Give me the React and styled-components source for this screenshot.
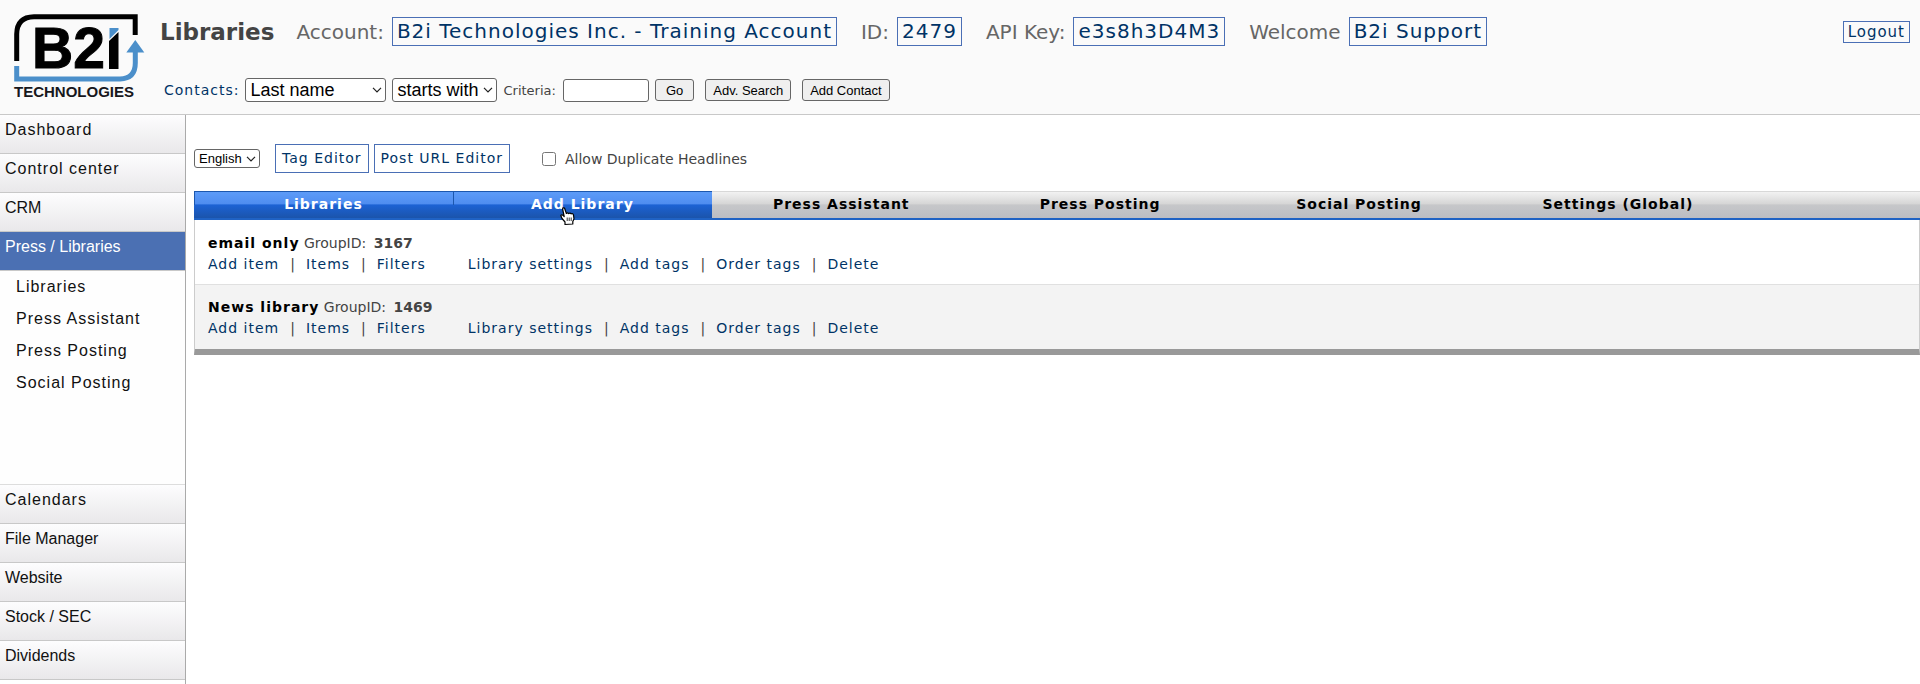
import React from 'react'
import styled, { createGlobalStyle, css } from 'styled-components'

const GlobalStyle = createGlobalStyle`
  * {
    box-sizing: border-box;
  }
  body {
    margin: 0;
    background-color: #ffffff;
    color: #444444;
    font-family: Verdana, 'DejaVu Sans', sans-serif;
    font-size: 14px;
  }
  a {
    color: #003366;
    text-decoration: none;
    letter-spacing: 1px;
  }
`

const sans = "Arial, 'Liberation Sans', sans-serif"

const chevron =
  "url(\"data:image/svg+xml,%3Csvg xmlns='http://www.w3.org/2000/svg' width='10' height='6'%3E%3Cpath d='M1 .8L5 5L9 .8' fill='none' stroke='%23222' stroke-width='1.2'/%3E%3C/svg%3E\")"

const Page = styled.div`
  display: flex;
  flex-direction: column;
  min-height: 100vh;
`

const Header = styled.header`
  display: flex;
  height: 114px;
  background-color: #fafafa;
`

const Logo = styled.svg`
  flex: none;
  width: 160px;
  height: 110px;
  text {
    font-family: ${sans};
    font-weight: bold;
  }
`

const HeaderContent = styled.div`
  flex: 1;
  display: flex;
  flex-direction: column;
  padding: 16px 10px 0 0;
`

const TitleRow = styled.div`
  display: flex;
  align-items: center;
  height: 31px;
  white-space: nowrap;
  h1 {
    margin: 0 22px 0 0;
    font-size: 23px;
    line-height: 28px;
  }
`

const Info = styled.div`
  display: flex;
  align-items: center;
  gap: 8px;
  margin-right: 24px;
  color: #666666;
  font-size: 20px;
`

const BoxLink = styled.a`
  border: 1px solid #4a6fb5;
  ${props =>
    props.$size === 'large' &&
    css`
      padding: 0 4px;
      font-size: 20px;
      line-height: 27px;
    `}
  ${props =>
    props.$size === 'medium' &&
    css`
      padding: 0 6px;
      font-size: 14px;
      line-height: 27px;
    `}
  ${props =>
    props.$size === 'small' &&
    css`
      margin-left: auto;
      padding: 0 4px;
      font-size: 15px;
      line-height: 20px;
    `}
`

const SearchForm = styled.form`
  display: flex;
  align-items: center;
  height: 24px;
  margin-top: 31px;
  padding-left: 4px;
  white-space: nowrap;
  a {
    margin-right: 6px;
  }
  label {
    margin-right: 7px;
    font-size: 13px;
  }
`

const Select = styled.select`
  appearance: none;
  width: ${props => props.$width}px;
  height: ${props => (props.$large ? 24 : 19)}px;
  margin: 0 ${props => (props.$large ? 6 : 0)}px 0 0;
  padding: 0 14px 0 4px;
  border: 1px solid #666666;
  border-radius: 3px;
  background: #ffffff ${chevron} no-repeat right 3px center;
  color: #000000;
  font-family: ${sans};
  font-size: ${props => (props.$large ? 18 : 13)}px;
`

const TextInput = styled.input`
  width: 86px;
  height: 23px;
  margin-right: 6px;
  border: 1px solid #666666;
  border-radius: 3px;
`

const Button = styled.button`
  height: 22px;
  margin-right: 11px;
  padding: 0 ${props => (props.$wide ? 10 : 7)}px;
  border: 1px solid #666666;
  border-radius: 3px;
  background-color: #efefef;
  color: #000000;
  font-family: ${sans};
  font-size: 13px;
`

const Body = styled.div`
  flex: 1;
  display: flex;
  border-top: 1px solid #c8c8c8;
`

const Sidebar = styled.nav`
  flex: none;
  width: 186px;
  border-right: 1px solid #aaaaaa;
  font-family: ${sans};
  font-size: 16px;
`

const MenuItem = styled.a`
  display: block;
  height: 39px;
  padding: 6px 5px 0;
  border-bottom: 1px solid #c8c8c8;
  background: ${props =>
    props.$active ? '#4b70b3' : 'linear-gradient(#fdfdfe, #e9e8ea)'};
  color: ${props => (props.$active ? '#ffffff' : '#111111')};
  letter-spacing: ${props => (props.$spaced ? 1 : 0)}px;
  line-height: 18px;
`

const SubMenu = styled.div`
  padding-bottom: 85px;
  border-bottom: 1px solid #dddddd;
  background-color: #fefefe;
  a {
    display: block;
    padding-left: 16px;
    color: #111111;
    line-height: 32px;
  }
`

const Main = styled.main`
  flex: 1;
  padding: 29px 0 0 8px;
`

const Toolbar = styled.div`
  display: flex;
  align-items: center;
  height: 29px;
  white-space: nowrap;
`

const ToolbarLinks = styled.div`
  display: flex;
  gap: 5px;
  margin: 0 32px 0 15px;
`

const Checkbox = styled.label`
  display: flex;
  align-items: center;
  gap: 9px;
  input {
    width: 14px;
    height: 14px;
    margin: 0;
  }
`

const Tabs = styled.div`
  position: relative;
  display: flex;
  margin-top: 18px;
  height: 29px;
  border-top: 1px solid #d8d8d8;
  border-bottom: 2px solid #1f62c4;
  background: linear-gradient(#f2f2f2, #d6d6d6 45%, #c6c7c9 50%, #bcbdc3);
`

const Tab = styled.a`
  width: 15%;
  margin-top: -1px;
  color: #000000;
  font-weight: bold;
  line-height: 27px;
  text-align: center;
  ${props =>
    props.$active &&
    css`
      border-top: 1px solid #1c57ae;
      background: linear-gradient(#1c57ae, #1c57ae) 0 0 / 1px 13px no-repeat,
        linear-gradient(#5c9bf8, #4f8df0 45%, #1c62d4 50%, #1b54ab);
      color: #ffffff;
      line-height: 25px;
    `}
`

const Pointer = styled.svg`
  position: absolute;
  top: 14px;
  left: 366px;
  width: 16px;
  height: 20px;
`

const LibraryList = styled.div`
  border: 1px solid #cccccc;
  border-top: 0;
  border-bottom: 6px solid #999999;
`

const Library = styled.section`
  height: 64px;
  padding: 13px 13px 0;
  background-color: ${props => (props.$shaded ? '#f3f3f3' : '#ffffff')};
  line-height: 21px;
  & + & {
    height: 65px;
    padding-top: 12px;
    border-top: 1px solid #e0e0e0;
  }
`

const LibraryName = styled.b`
  color: #000000;
  letter-spacing: 1px;
`

const GroupId = styled.b`
  margin-left: 3px;
`

const Actions = styled.div`
  display: flex;
  gap: 42px;
`

const ActionGroup = styled.div`
  display: flex;
  a + a::before {
    content: '|';
    margin: 0 10px 0 11px;
    color: #444444;
  }
`

const infos = [
  { label: 'Account:', value: 'B2i Technologies Inc. - Training Account' },
  { label: 'ID:', value: '2479' },
  { label: 'API Key:', value: 'e3s8h3D4M3' },
  { label: 'Welcome', value: 'B2i Support' },
]

const topMenu = [
  { name: 'Dashboard', spaced: true },
  { name: 'Control center', spaced: true },
  { name: 'CRM' },
  { name: 'Press / Libraries', active: true },
]

const subMenu = ['Libraries', 'Press Assistant', 'Press Posting', 'Social Posting']

const bottomMenu = [
  { name: 'Calendars', spaced: true },
  { name: 'File Manager' },
  { name: 'Website' },
  { name: 'Stock / SEC' },
  { name: 'Dividends' },
]

const tabs = [
  { name: 'Libraries', active: true },
  { name: 'Add Library', active: true },
  { name: 'Press Assistant' },
  { name: 'Press Posting' },
  { name: 'Social Posting' },
  { name: 'Settings (Global)' },
]

const libraries = [
  { name: 'email only', id: 3167 },
  { name: 'News library', id: 1469 },
]

const actions = [
  ['Add item', 'Items', 'Filters'],
  ['Library settings', 'Add tags', 'Order tags', 'Delete'],
]

const Menu = ({ items }) =>
  items.map(item => (
    <MenuItem
      href="#"
      key={item.name}
      $active={item.active}
      $spaced={item.spaced}
    >
      {item.name}
    </MenuItem>
  ))

const B2iLogo = () => (
  <Logo viewBox="0 0 160 110" role="img" aria-label="B2i Technologies">
    <path
      d="M16.7 61V34Q17 17 34 16.7H135.2V35"
      fill="none"
      stroke="#000000"
      strokeWidth="5"
    />
    <path
      d="M16.7 66V79H120Q135.3 78.5 135.3 63V50"
      fill="none"
      stroke="#4b8fca"
      strokeWidth="5"
    />
    <path d="M135.3 40L144.3 52.5H126.3Z" fill="#4b8fca" />
    <text x="32" y="68" fontSize="57" stroke="#000000" strokeWidth="1">
      B2
    </text>
    <path d="M109.5 28H118.5V30L109.5 39Z" fill="#4b8fca" />
    <path d="M118.5 32V69H109V41Z" fill="#000000" />
    <text x="14" y="97" fontSize="15" fill="#17171c">
      TECHNOLOGIES
    </text>
  </Logo>
)

const HandPointer = () => (
  <Pointer viewBox="0 0 16 20" aria-hidden="true">
    <path
      d="M5 18.5V16L2 12.5L.8 9.500Q1.5 8.2 3 9.3L4.2 10.5L2.6 3Q2.8 1.3 4.5 2L6.4 7.5Q7.5 6.2 8.7 7.6Q10 6.4 11.2 7.8Q13 7 13.5 9L14 13L12.8 15.5V18Z"
      fill="#ffffff"
      stroke="#000000"
      strokeWidth="1.2"
      strokeLinejoin="round"
    />
    <path
      d="M7.2 11.5V15M9.2 11.5V15M11.2 11.5V15"
      stroke="#000000"
      strokeWidth=".8"
    />
  </Pointer>
)

const App = () => (
  <Page>
    <GlobalStyle />
    <Header>
      <B2iLogo />
      <HeaderContent>
        <TitleRow>
          <h1>Libraries</h1>
          {infos.map(info => (
            <Info key={info.label}>
              {info.label}
              <BoxLink href="#" $size="large">
                {info.value}
              </BoxLink>
            </Info>
          ))}
          <BoxLink href="#" $size="small">
            Logout
          </BoxLink>
        </TitleRow>
        <SearchForm onSubmit={e => e.preventDefault()}>
          <a href="#">Contacts:</a>
          <Select $large $width={141} aria-label="Search field">
            <option>Last name</option>
          </Select>
          <Select $large $width={105} aria-label="Match type">
            <option>starts with</option>
          </Select>
          <label htmlFor="criteria">Criteria:</label>
          <TextInput id="criteria" type="text" />
          <Button $wide>Go</Button>
          <Button type="button">Adv. Search</Button>
          <Button type="button">Add Contact</Button>
        </SearchForm>
      </HeaderContent>
    </Header>
    <Body>
      <Sidebar>
        <Menu items={topMenu} />
        <SubMenu>
          {subMenu.map(name => (
            <a href="#" key={name}>
              {name}
            </a>
          ))}
        </SubMenu>
        <Menu items={bottomMenu} />
      </Sidebar>
      <Main>
        <Toolbar>
          <Select $width={66} aria-label="Language">
            <option>English</option>
          </Select>
          <ToolbarLinks>
            <BoxLink href="#" $size="medium">
              Tag Editor
            </BoxLink>
            <BoxLink href="#" $size="medium">
              Post URL Editor
            </BoxLink>
          </ToolbarLinks>
          <Checkbox>
            <input type="checkbox" />
            Allow Duplicate Headlines
          </Checkbox>
        </Toolbar>
        <Tabs>
          {tabs.map(tab => (
            <Tab href="#" key={tab.name} $active={tab.active}>
              {tab.name}
            </Tab>
          ))}
          <HandPointer />
        </Tabs>
        <LibraryList>
          {libraries.map((library, i) => (
            <Library key={library.id} $shaded={i % 2 === 1}>
              <div>
                <LibraryName>{library.name}</LibraryName> GroupID:{' '}
                <GroupId>{library.id}</GroupId>
              </div>
              <Actions>
                {actions.map((group, j) => (
                  <ActionGroup key={`group-${j}`}>
                    {group.map(name => (
                      <a href="#" key={name}>
                        {name}
                      </a>
                    ))}
                  </ActionGroup>
                ))}
              </Actions>
            </Library>
          ))}
        </LibraryList>
      </Main>
    </Body>
  </Page>
)

export default App
